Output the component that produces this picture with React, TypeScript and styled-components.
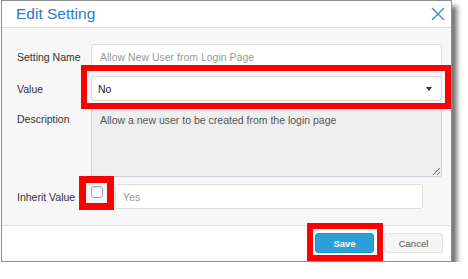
import React from 'react';
import styled, { createGlobalStyle } from 'styled-components';

const GlobalStyle = createGlobalStyle`
  html, body {
    margin: 0;
    padding: 0;
    background: #ffffff;
  }
  body {
    font-family: "Liberation Sans", Arial, sans-serif;
  }
  * {
    box-sizing: border-box;
  }
`;

type Inset = { $t: number; $r: number; $b: number; $l: number; $w: number };

const App = () => {
  return (
    <>
      <GlobalStyle />
      <Dialog>
        <Header>
          <Title>Edit Setting</Title>
          <CloseButton aria-label="close">
            <svg width="14" height="14" viewBox="0 0 14 14">
              <path d="M1 1 L13 13 M13 1 L1 13" stroke="#4a90d9" strokeWidth="1.5" fill="none" />
            </svg>
          </CloseButton>
        </Header>

        <Body>
          <Row>
            <Label>Setting Name</Label>
            <TextInput readOnly value="Allow New User from Login Page" $muted />
          </Row>

          <Row>
            <Label>Value</Label>
            <Highlight $t={-11} $r={-9} $b={-8} $l={-10} $w={6}>
              <Select>
                <span>No</span>
                <Caret />
              </Select>
            </Highlight>
          </Row>

          <Row $top>
            <Label $top>Description</Label>
            <TextArea readOnly value="Allow a new user to be created from the login page" />
          </Row>

          <Row>
            <Label>Inherit Value</Label>
            <InheritField>
              <CheckWrap $t={-10} $r={-11} $b={-12} $l={-12} $w={7}>
                <Check />
              </CheckWrap>
              <InheritInput readOnly value="Yes" $muted />
            </InheritField>
          </Row>
        </Body>

        <Footer>
          <Highlight $t={-10} $r={-9} $b={-8} $l={-8} $w={6}>
            <SaveButton>Save</SaveButton>
          </Highlight>
          <CancelButton>Cancel</CancelButton>
        </Footer>
      </Dialog>
    </>
  );
};

const Dialog = styled.div`
  margin-left: 1px;
  width: 451px;
  height: 262px;
  border: 1px solid #8f8f8f;
  background: #ffffff;
  box-shadow: 5px 6px 5px rgba(0, 0, 0, 0.55);
  display: flex;
  flex-direction: column;
`;

const Header = styled.div`
  height: 27px;
  display: flex;
  align-items: center;
  justify-content: space-between;
  padding: 0 6px 0 14px;
  border-bottom: 1px solid #dcdcdc;
`;

const Title = styled.h2`
  margin: 0;
  font-size: 15.5px;
  font-weight: normal;
  color: #2b78c5;
`;

const CloseButton = styled.div`
  display: flex;
  width: 14px;
  height: 14px;
`;

const Body = styled.div`
  flex: 1;
  background: #f7f7f7;
  padding: 16px 9px 15px 15px;
  border-bottom: 1px solid #dddddd;
  display: flex;
  flex-direction: column;
  gap: 7px;
`;

const Row = styled.div<{ $top?: boolean }>`
  display: grid;
  grid-template-columns: 74px 1fr;
  align-items: ${(p) => (p.$top ? 'start' : 'center')};
`;

const Label = styled.label<{ $top?: boolean }>`
  font-size: 10.5px;
  color: #333333;
  padding-top: ${(p) => (p.$top ? '5px' : '0')};
`;

const TextInput = styled.input<{ $muted?: boolean }>`
  height: 25px;
  width: 100%;
  border: 1px solid #dddddd;
  border-radius: 3px;
  background: #ffffff;
  padding: 0 8px;
  font-family: "Liberation Sans", Arial, sans-serif;
  font-size: 10.5px;
  color: ${(p) => (p.$muted ? '#999999' : '#333333')};
  outline: none;
`;

const Highlight = styled.div<Inset>`
  position: relative;
  display: flex;

  &::after {
    content: '';
    position: absolute;
    top: ${(p) => p.$t}px;
    right: ${(p) => p.$r}px;
    bottom: ${(p) => p.$b}px;
    left: ${(p) => p.$l}px;
    border: ${(p) => p.$w}px solid #ff0000;
    pointer-events: none;
  }
`;

const CheckWrap = styled(Highlight)`
  flex-shrink: 0;
  margin-top: 2px;
`;

const Select = styled.div`
  height: 25px;
  width: 100%;
  border: 1px solid #d6d6d6;
  border-radius: 3px;
  background: #ffffff;
  padding: 0 9px 0 6px;
  display: flex;
  align-items: center;
  justify-content: space-between;
  font-size: 10.5px;
  color: #222222;
`;

const Caret = styled.span`
  width: 0;
  height: 0;
  border-left: 3px solid transparent;
  border-right: 3px solid transparent;
  border-top: 4px solid #333333;
`;

const TextArea = styled.textarea`
  height: 69px;
  width: 100%;
  border: 1px solid #ccd5de;
  border-radius: 2px;
  background: #eeeeee;
  padding: 5px 8px;
  font-family: "Liberation Sans", Arial, sans-serif;
  font-size: 10.5px;
  color: #555555;
  resize: vertical;
  outline: none;
`;

const InheritField = styled.div`
  display: flex;
  align-items: flex-start;
  padding-right: 19px;
`;

const Check = styled.span`
  display: block;
  width: 12px;
  height: 12px;
  border: 1px solid #a5a5a5;
  border-radius: 3px;
  background: #ffffff;
  box-shadow: inset 0 1px 1px rgba(0, 0, 0, 0.08);
`;

const InheritInput = styled(TextInput)`
  margin-left: 12px;
  flex: 1;
  padding: 0 7px;
`;

const Footer = styled.div`
  height: 35px;
  display: flex;
  align-items: center;
  justify-content: flex-end;
  gap: 10px;
  padding: 0 8px 1px 0;
`;

const Button = styled.button`
  width: 59px;
  height: 20px;
  border-radius: 3px;
  font-family: "Liberation Sans", Arial, sans-serif;
  font-size: 9.5px;
  padding: 0;
`;

const SaveButton = styled(Button)`
  background: #2a9fd8;
  border: 1px solid #2593cc;
  color: #ffffff;
  font-weight: bold;
`;

const CancelButton = styled(Button)`
  background: #f5f5f5;
  border: 1px solid #e2e2e2;
  color: #555555;
`;

export default App;
